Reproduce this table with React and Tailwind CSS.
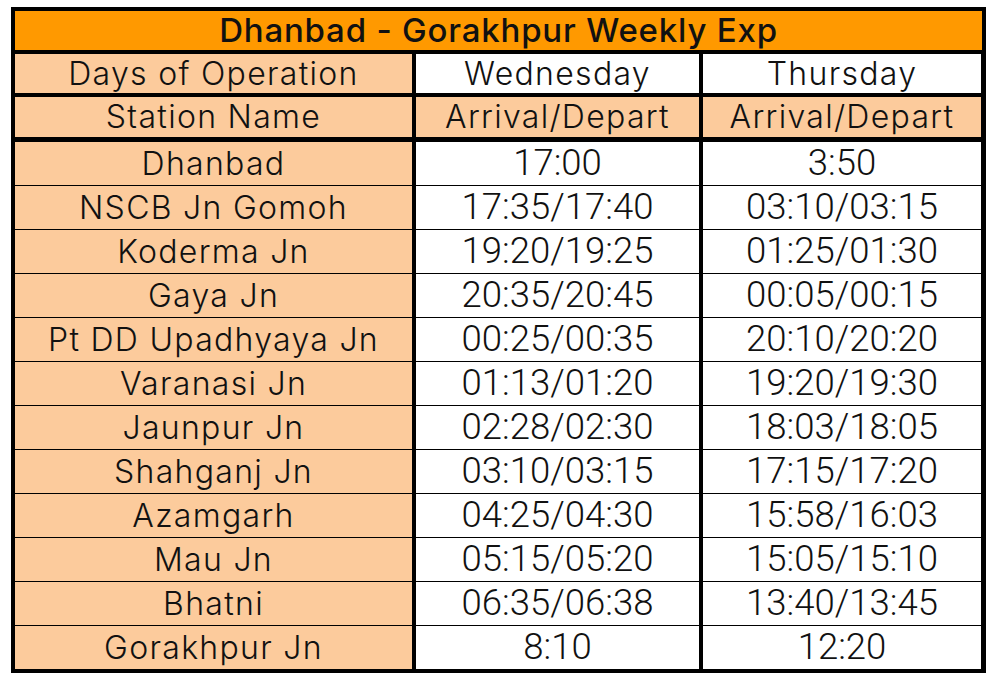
import React from "react";

const rows = [
  ["Dhanbad", "17:00", "3:50"],
  ["NSCB Jn Gomoh", "17:35/17:40", "03:10/03:15"],
  ["Koderma Jn", "19:20/19:25", "01:25/01:30"],
  ["Gaya Jn", "20:35/20:45", "00:05/00:15"],
  ["Pt DD Upadhyaya Jn", "00:25/00:35", "20:10/20:20"],
  ["Varanasi Jn", "01:13/01:20", "19:20/19:30"],
  ["Jaunpur Jn", "02:28/02:30", "18:03/18:05"],
  ["Shahganj Jn", "03:10/03:15", "17:15/17:20"],
  ["Azamgarh", "04:25/04:30", "15:58/16:03"],
  ["Mau Jn", "05:15/05:20", "15:05/15:10"],
  ["Bhatni", "06:35/06:38", "13:40/13:45"],
  ["Gorakhpur Jn", "8:10", "12:20"],
];

const txt = "font-['Inter',sans-serif] font-[350] text-[32px] tracking-[1.3px] leading-none text-[#111]";
const num = "font-['Roboto',sans-serif] font-light text-[36.5px] leading-none text-[#111]";
const cell = "flex items-center justify-center";

export default function App() {
  return (
    <div className="w-[995px] h-[684px] bg-white pl-[11px] pt-[7px]">
      <div className="w-[975px] bg-black p-1 flex flex-col">
        <div className={`h-[39px] bg-[#ff9900] ${cell} mb-1`}>
          <span className="font-['Inter',sans-serif] font-[470] text-[33px] tracking-[0.8px] leading-none text-[#111]">Dhanbad - Gorakhpur Weekly Exp</span>
        </div>
        <div className="grid grid-cols-[397px_283px_278px] gap-x-1 h-[39px] mb-1">
          <div className={`bg-[#fccb9c] ${cell}`}><span className={txt}>Days of Operation</span></div>
          <div className={`bg-white ${cell}`}><span className={txt}>Wednesday</span></div>
          <div className={`bg-white ${cell}`}><span className={txt}>Thursday</span></div>
        </div>
        <div className="grid grid-cols-[397px_283px_278px] gap-x-1 h-[40px] mb-[5px]">
          <div className={`bg-[#fccb9c] ${cell}`}><span className={txt}>Station Name</span></div>
          <div className={`bg-[#fccb9c] ${cell}`}><span className={txt}>Arrival/Depart</span></div>
          <div className={`bg-[#fccb9c] ${cell}`}><span className={txt}>Arrival/Depart</span></div>
        </div>
        <div className="flex flex-col gap-px">
          {rows.map(([s, a, b]) => (
            <div key={s} className="grid grid-cols-[397px_283px_278px] gap-x-1 h-[43px]">
              <div className={`bg-[#fccb9c] ${cell}`}><span className={txt}>{s}</span></div>
              <div className={`bg-white ${cell}`}><span className={num}>{a}</span></div>
              <div className={`bg-white ${cell}`}><span className={num}>{b}</span></div>
            </div>
          ))}
        </div>
      </div>
    </div>
  );
}
